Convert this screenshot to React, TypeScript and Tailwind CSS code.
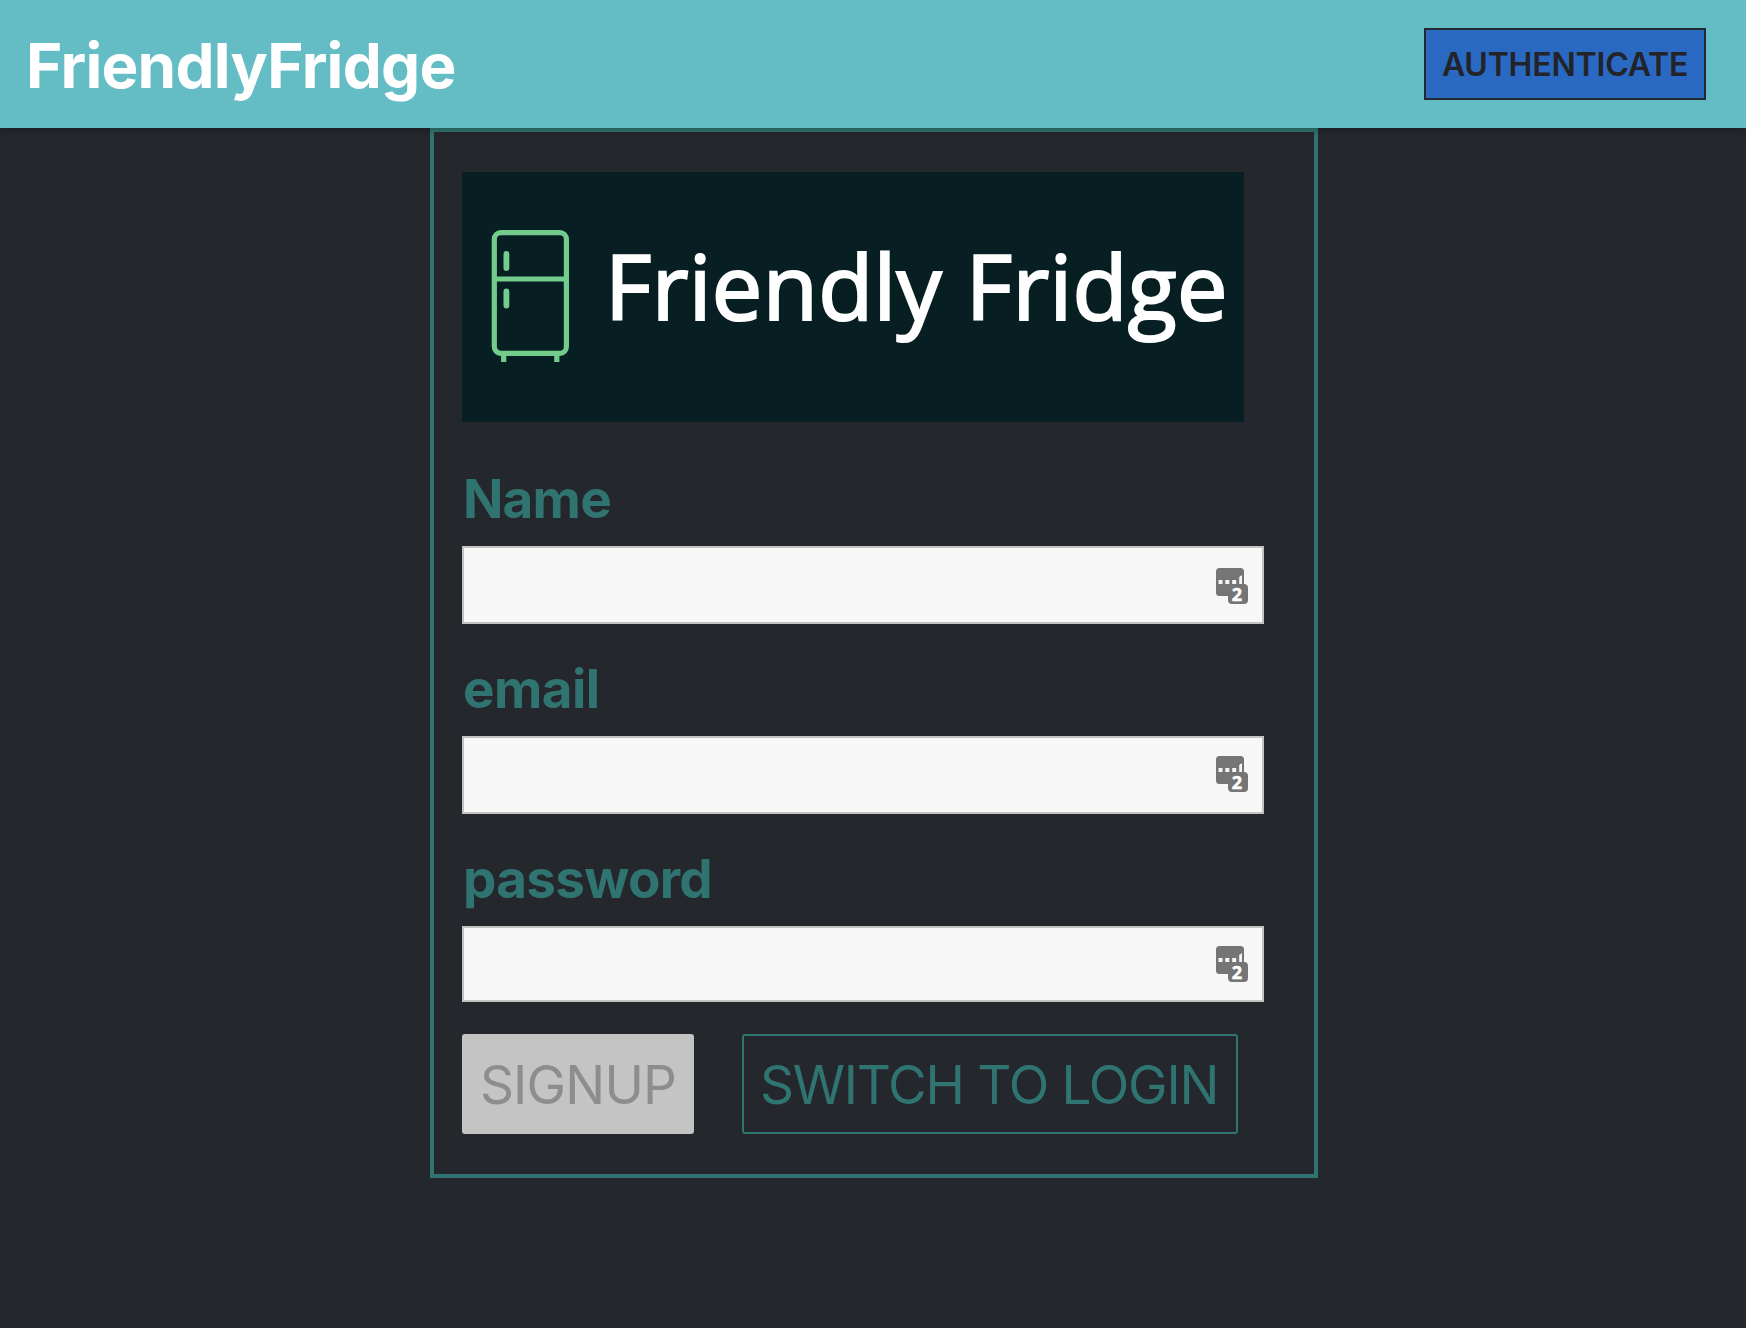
type FieldProps = { id: string; label: string; type: string; labelClass: string; inputClass: string; iconClass: string };

function CredentialIcon({ className }: { className: string }) {
  return (
    <svg className={`absolute right-[15px] h-[37px] w-[33px] ${className}`} viewBox="0 0 33 37">
      <rect x="0" y="0" width="28" height="28" rx="3.5" fill="#757575" />
      <rect x="12" y="16" width="20" height="20" rx="4" fill="#757575" />
      <g fill="#f6f6f6">
        <rect x="2.5" y="12" width="4" height="4" />
        <rect x="9.3" y="12" width="4" height="4" />
        <rect x="16.2" y="12" width="4" height="4" />
        <path d="M23.2 9l2.8-2v9h-2.8z" />
      </g>
      <text x="21" y="33" textAnchor="middle" fill="#ffffff" stroke="#ffffff" strokeWidth="0.5" className="font-['Open_Sans',sans-serif] text-[18px] font-bold">
        2
      </text>
    </svg>
  );
}

function Field({ id, label, type, labelClass, inputClass, iconClass }: FieldProps) {
  return (
    <div className="flex flex-col">
      <label htmlFor={id} className={`text-[53px] leading-[64px] font-bold text-[#307472] ${labelClass}`}>
        {label}
      </label>
      <div className="relative mt-[15px]">
        <input
          id={id}
          type={type}
          className={`block w-full border-2 border-[#c2c2c2] bg-[#f7f7f7] px-3 text-3xl outline-none ${inputClass}`}
        />
        <CredentialIcon className={iconClass} />
      </div>
    </div>
  );
}

function Logo() {
  return (
    <div className="flex h-[250px] w-[782px] items-start bg-[#071f23]">
      <svg className="mt-[57px] ml-[28px] h-[134px] w-[80px] shrink-0" viewBox="0 0 80 134" fill="none" stroke="#74cc8c" strokeWidth="5.2">
        <rect x="4.3" y="3.6" width="72.1" height="120.7" rx="6.5" />
        <path d="M4.3 50h72.1M13.7 124v9M66.8 124v9" />
        <path d="M16.4 25v14M16.4 62.5v14" strokeWidth="5.8" strokeLinecap="round" />
      </svg>
      <span className="mt-[65px] ml-[35px] font-['Open_Sans',sans-serif] text-[90px] leading-[96px] font-medium tracking-[0.3px] whitespace-nowrap text-white [-webkit-text-stroke:2.2px_white]">
        Friendly Fridge
      </span>
    </div>
  );
}

export default function App() {
  return (
    <div className="flex min-h-screen flex-col bg-[#24272c] font-['Inter',sans-serif]">
      <header className="relative z-10 flex h-[128px] items-center justify-between bg-[#64bdc5] pr-[40px] pl-[26px] shadow-[0_2px_8px_rgba(0,0,0,0.26)]">
        <h1 className="pt-[3px] text-[62px] leading-[72px] font-bold tracking-[-0.75px] text-white">FriendlyFridge</h1>
        <button className="h-[72px] w-[282px] border-2 border-[#22282f] bg-[#2a69c1] pt-[2px] text-[32px] leading-[40px] font-semibold tracking-[-0.2px] whitespace-nowrap text-[#222429]">
          AUTHENTICATE
        </button>
      </header>
      <main className="ml-[430px] h-[1050px] w-[888px] border-4 border-[#307472] px-[28px] pt-[40px]">
        <Logo />
        <form className="mt-[45px] flex w-[802px] flex-col gap-[33px]">
          <Field id="name" label="Name" type="text" labelClass="tracking-[-0.8px] pl-px" inputClass="h-[78px]" iconClass="top-[22px]" />
          <Field id="email" label="email" type="email" labelClass="tracking-[-0.6px] pl-px" inputClass="h-[78px]" iconClass="top-[20px]" />
          <Field id="password" label="password" type="password" labelClass="tracking-[-0.7px] pl-px" inputClass="h-[76px]" iconClass="top-[20px]" />
        </form>
        <div className="mt-[32px] flex gap-[48px] text-[53px] leading-[60px] whitespace-nowrap">
          <button className="h-[100px] w-[232px] rounded-[3px] bg-[#c4c4c4] pt-px tracking-[-0.8px] text-[#8d8d8d]">SIGNUP</button>
          <button className="h-[100px] w-[496px] rounded-[3px] border-2 border-[#307472] pt-px pr-[2px] tracking-[-1.25px] text-[#307472]">
            SWITCH TO LOGIN
          </button>
        </div>
      </main>
    </div>
  );
}
